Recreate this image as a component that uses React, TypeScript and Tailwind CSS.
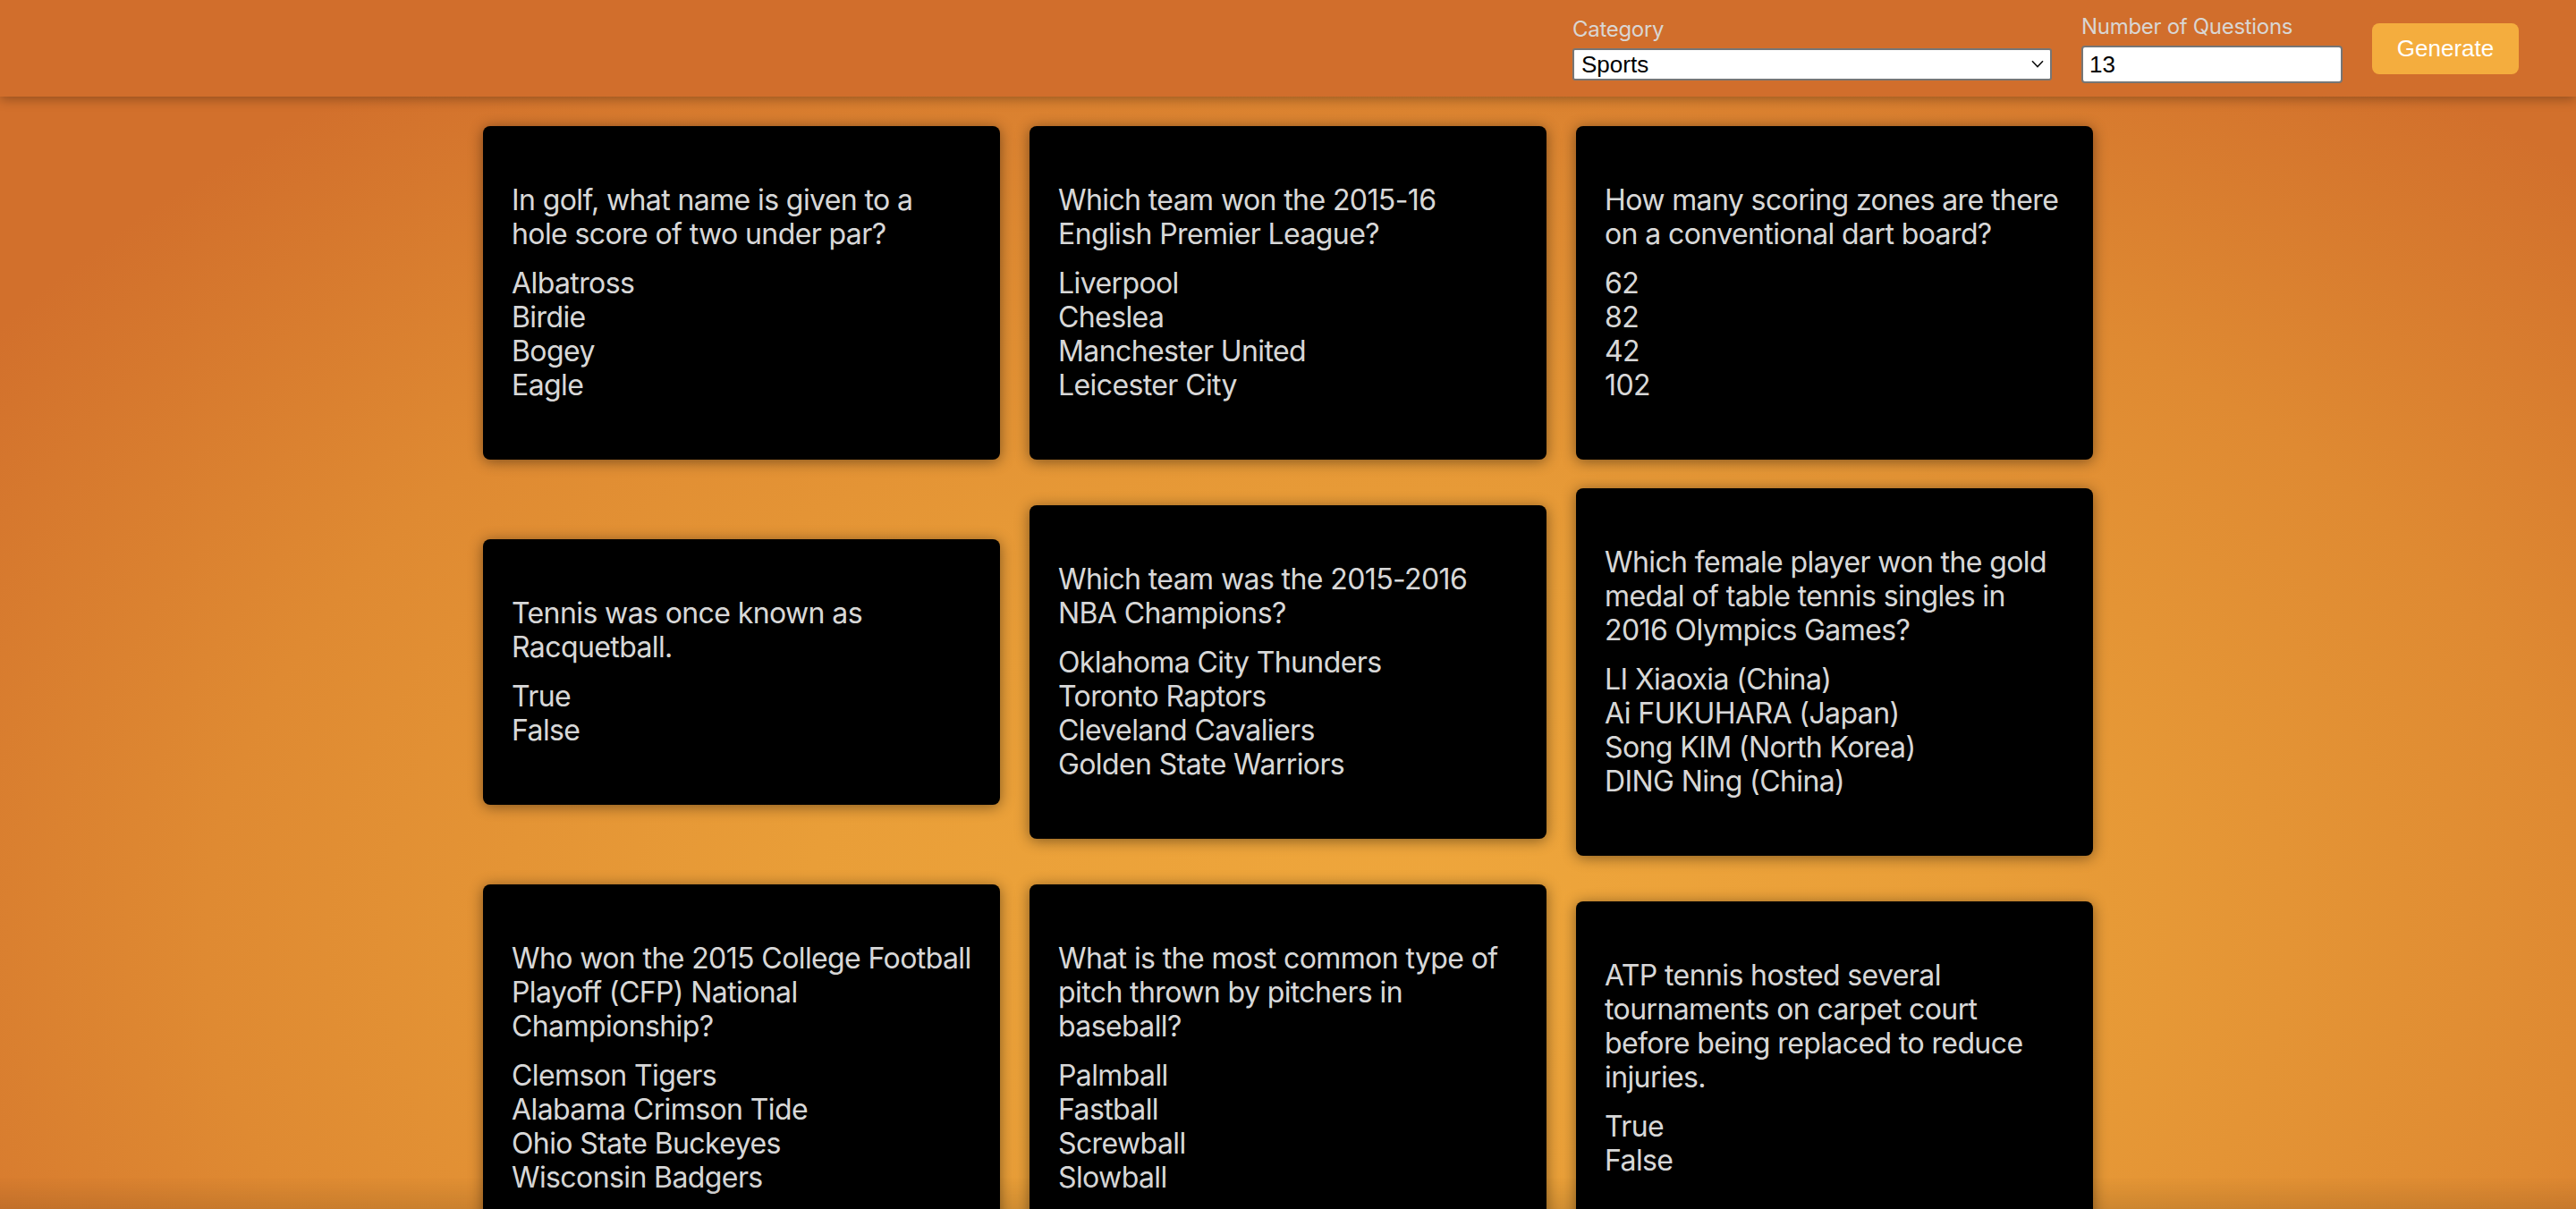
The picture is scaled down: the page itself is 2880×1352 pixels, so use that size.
import React from 'react';

interface Question {
  question: string;
  answers: string[];
}

// line breaks follow the wrapping of the original layout
const questions: Question[] = [
  {
    question: 'In golf, what name is given to a\nhole score of two under par?',
    answers: ['Albatross', 'Birdie', 'Bogey', 'Eagle'],
  },
  {
    question: 'Which team won the 2015-16\nEnglish Premier League?',
    answers: ['Liverpool', 'Cheslea', 'Manchester United', 'Leicester City'],
  },
  {
    question: 'How many scoring zones are there\non a conventional dart board?',
    answers: ['62', '82', '42', '102'],
  },
  {
    question: 'Tennis was once known as\nRacquetball.',
    answers: ['True', 'False'],
  },
  {
    question: 'Which team was the 2015-2016\nNBA Champions?',
    answers: ['Oklahoma City Thunders', 'Toronto Raptors', 'Cleveland Cavaliers', 'Golden State Warriors'],
  },
  {
    question: 'Which female player won the gold\nmedal of table tennis singles in\n2016 Olympics Games?',
    answers: ['LI Xiaoxia (China)', 'Ai FUKUHARA (Japan)', 'Song KIM (North Korea)', 'DING Ning (China)'],
  },
  {
    question: 'Who won the 2015 College Football\nPlayoff (CFP) National\nChampionship?',
    answers: ['Clemson Tigers', 'Alabama Crimson Tide', 'Ohio State Buckeyes', 'Wisconsin Badgers'],
  },
  {
    question: 'What is the most common type of\npitch thrown by pitchers in\nbaseball?',
    answers: ['Palmball', 'Fastball', 'Screwball', 'Slowball'],
  },
  {
    question: 'ATP tennis hosted several\ntournaments on carpet court\nbefore being replaced to reduce\ninjuries.',
    answers: ['True', 'False'],
  },
  {
    question: 'Which country hosted the 2014 FIFA World Cup?',
    answers: ['Germany', 'Brazil', 'Argentina', 'South Africa'],
  },
  {
    question: 'How many players are on the field for one team in a game of rugby union?',
    answers: ['11', '13', '15', '9'],
  },
  {
    question: 'In bowling, what is the term for three consecutive strikes?',
    answers: ['Turkey', 'Hambone', 'Double', 'Spare'],
  },
  {
    question: 'Which city hosted the 2012 Summer Olympics?',
    answers: ['Beijing', 'London', 'Rio de Janeiro', 'Athens'],
  },
];

const QuestionCard: React.FC<{ item: Question }> = ({ item }) => (
  <div className="bg-black rounded-[8px] px-8 py-16 shadow-[0_2px_16px_rgba(0,0,0,0.45)] text-[32px] leading-[38px] tracking-[-0.6px] text-[rgba(255,255,255,0.87)] font-['Inter',sans-serif]">
    <p className="mb-[17px] whitespace-pre-line">{item.question}</p>
    {item.answers.map((a, i) => (
      <div key={i}>{a}</div>
    ))}
  </div>
);

export default function App() {
  return (
    <div className="relative min-h-screen bg-fixed bg-[radial-gradient(ellipse_1900px_1200px_at_1560px_1050px,#efa73c_0%,#e99e38_35%,#df8a32_70%,#d2702c_100%)]">
      {/* Header */}
      <header className="relative z-10 h-[108px] bg-[#d16e2c] shadow-[0_3px_12px_rgba(0,0,0,0.3)] flex items-center justify-end pr-16 gap-[33px] font-['Inter',sans-serif]">
        <div className="flex flex-col">
          <label className="text-[24px] leading-[29px] tracking-[-0.3px] text-[#d9d6d3] mb-[7px]">Category</label>
          <div className="relative">
            <select
              defaultValue="sports"
              className="appearance-none w-[536px] h-[36px] bg-white border-2 border-[#767676] rounded-[3px] pl-[8px] text-[26px] leading-[30px] text-black font-['Liberation_Sans',Arial,sans-serif] outline-none"
            >
              <option value="sports">Sports</option>
            </select>
            <svg
              className="absolute right-[9px] top-[13px] pointer-events-none"
              width="14"
              height="9"
              viewBox="0 0 14 9"
              fill="none"
            >
              <path d="M1 1.2L7 7.5L13 1.2" stroke="#111" strokeWidth="1.6" />
            </svg>
          </div>
        </div>
        <div className="flex flex-col">
          <label className="text-[24px] leading-[29px] tracking-[-0.3px] text-[#d9d6d3] mb-[7px]">Number of Questions</label>
          <input
            type="text"
            defaultValue="13"
            className="w-[292px] h-[42px] bg-white border-2 border-[#767676] rounded-[4px] pl-[7px] text-[26px] text-black font-['Liberation_Sans',Arial,sans-serif] outline-none"
          />
        </div>
        <button className="w-[164px] h-[57px] bg-[#f4ad3e] rounded-[8px] text-white text-[26px] font-['Liberation_Sans',Arial,sans-serif]">
          Generate
        </button>
      </header>

      {/* Questions */}
      <main className="w-[1800px] mx-auto pt-[33px] pb-16 grid grid-cols-3 gap-x-[33px] gap-y-8 items-center">
        {questions.map((q, i) => (
          <QuestionCard key={i} item={q} />
        ))}
      </main>

      <div className="pointer-events-none fixed bottom-0 left-0 right-0 h-[36px] bg-gradient-to-b from-transparent to-[rgba(0,0,0,0.1)]" />
    </div>
  );
}
